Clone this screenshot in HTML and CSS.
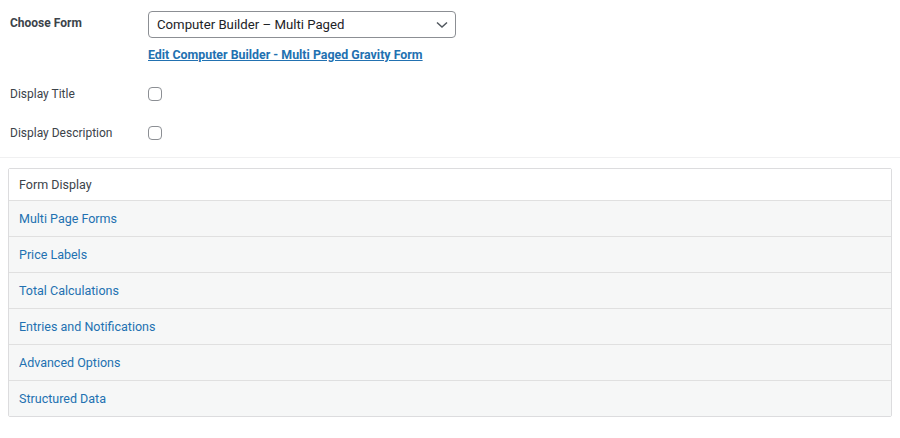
FILE: index.html
```html
<!DOCTYPE html>
<html>
<head>
<meta charset="utf-8">
<link rel="stylesheet" href="styles.css">
</head>
<body>
<div class="settings">
  <div class="field field-form">
    <div class="label bold">Choose Form</div>
    <div class="control">
      <div class="select">
        <span>Computer Builder – Multi Paged</span>
        <svg class="chev" width="12" height="8" viewBox="0 0 12 8"><path d="M1 1.5 L6 6 L11 1.5" fill="none" stroke="#50575e" stroke-width="1.5"/></svg>
      </div>
      <a class="edit-link" href="#">Edit Computer Builder - Multi Paged Gravity Form</a>
    </div>
  </div>
  <div class="field field-check">
    <div class="label">Display Title</div>
    <div class="control"><span class="checkbox"></span></div>
  </div>
  <div class="field field-check">
    <div class="label">Display Description</div>
    <div class="control"><span class="checkbox"></span></div>
  </div>
</div>
<div class="separator"></div>
<div class="panel">
  <div class="panel-head">Form Display</div>
  <div class="panel-row">Multi Page Forms</div>
  <div class="panel-row">Price Labels</div>
  <div class="panel-row">Total Calculations</div>
  <div class="panel-row">Entries and Notifications</div>
  <div class="panel-row">Advanced Options</div>
  <div class="panel-row">Structured Data</div>
</div>
</body>
</html>
```

FILE: styles.css
```css
html, body {
  margin: 0;
  padding: 0;
  background: #fff;
}
body {
  font-family: Roboto, "Liberation Sans", sans-serif;
  color: #3c434a;
  width: 900px;
}
.settings {
  padding: 11px 0 0 10px;
}
.field {
  display: flex;
  align-items: flex-start;
}
.label {
  width: 138px;
  font-size: 12px;
  color: #3c434a;
}
.bold { font-weight: 700; }
.field-form .label {
  padding-top: 5px;
}
.select {
  height: 25px;
  border: 1px solid #8c8f94;
  border-radius: 4px;
  display: flex;
  align-items: center;
  justify-content: space-between;
  padding: 0 7px 0 8px;
  box-sizing: content-box;
  width: 291px;
  font-size: 13.2px;
  color: #1d2327;
}
.edit-link {
  display: block;
  margin-top: 9px;
  font-size: 12.4px;
  font-weight: 700;
  color: #2271b1;
  text-decoration: underline;
}
.field-check {
  align-items: center;
  height: 14px;
}
.field-form + .field-check { margin-top: 25px; }
.field-check + .field-check { margin-top: 25px; }
.checkbox {
  display: block;
  width: 12px;
  height: 12px;
  border: 1px solid #8c8f94;
  border-radius: 4px;
  background: #fff;
}
.separator {
  margin-top: 17px;
  height: 1px;
  background: #f0f0f1;
}
.panel {
  margin: 10px 8px 0 8px;
  border: 1px solid #dcdcde;
  border-radius: 2px;
  font-size: 12.5px;
}
.panel-head {
  height: 31px;
  line-height: 31px;
  padding-left: 10px;
  background: #fff;
  color: #3c434a;
  border-bottom: 1px solid #e0e0e0;
}
.panel-row {
  height: 35px;
  line-height: 35px;
  padding-left: 10px;
  background: #f6f7f7;
  color: #2271b1;
  border-bottom: 1px solid #e0e0e0;
}
.panel-row:last-child { border-bottom: none; }
```
